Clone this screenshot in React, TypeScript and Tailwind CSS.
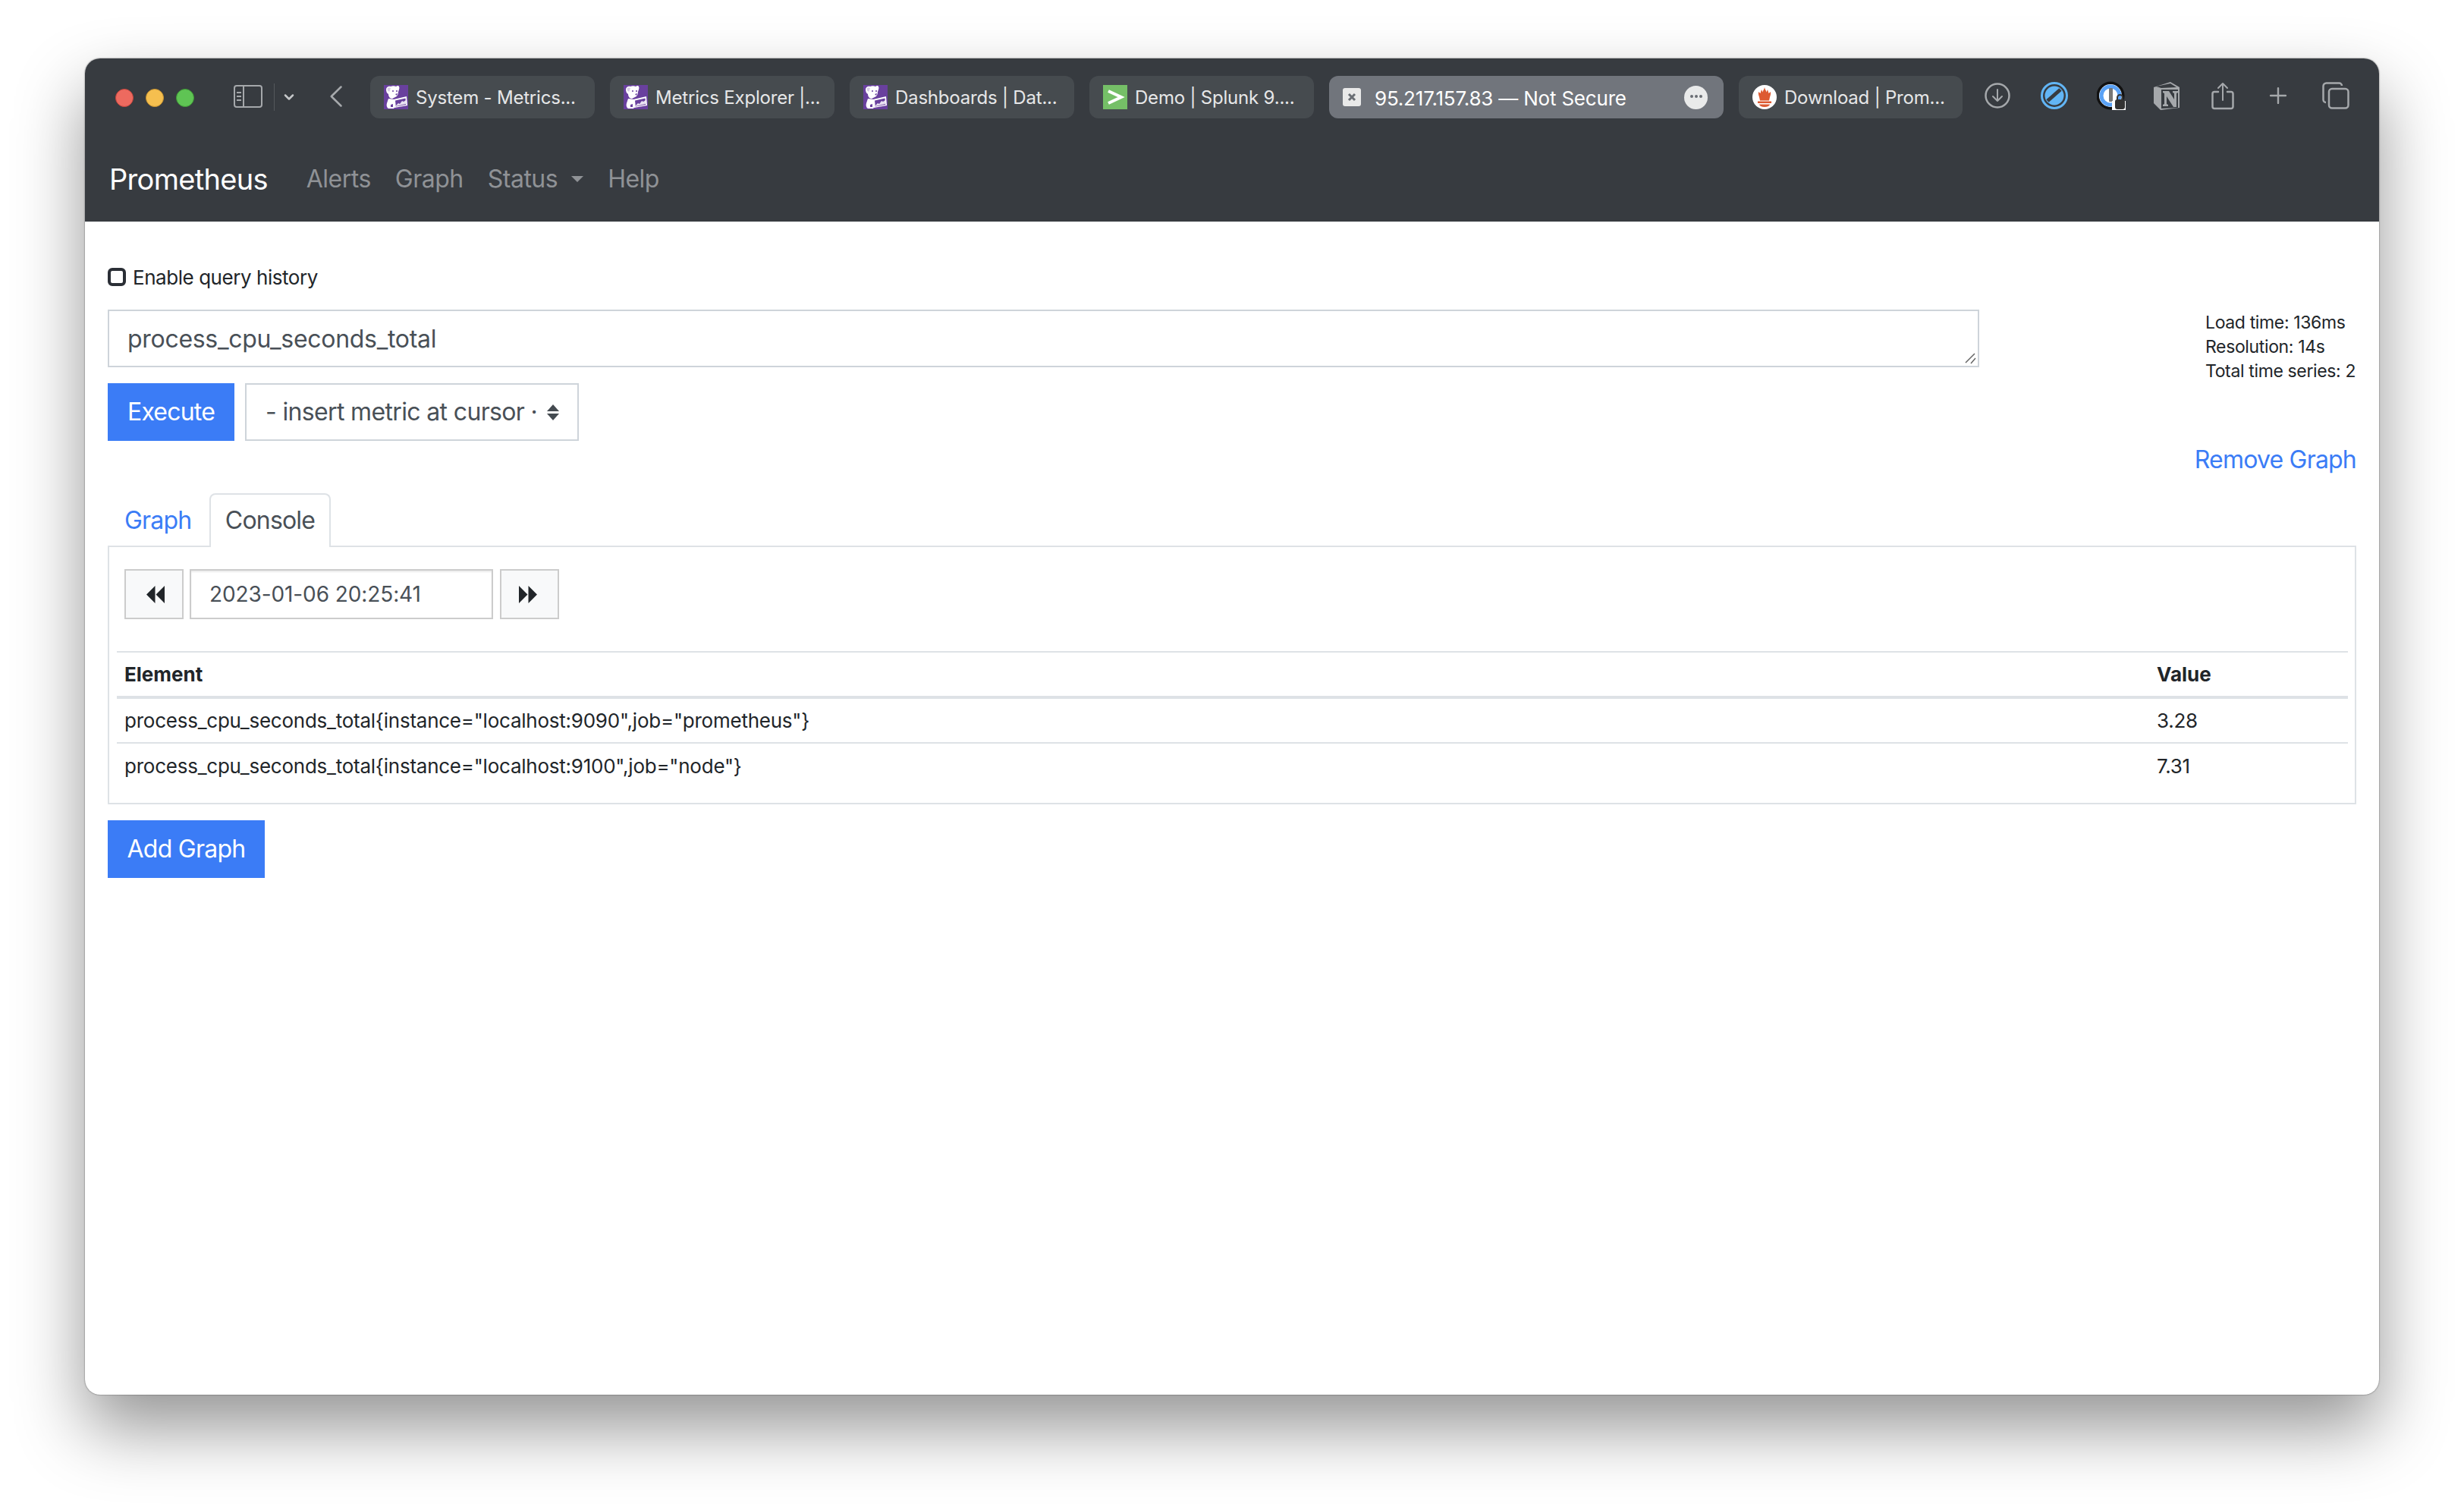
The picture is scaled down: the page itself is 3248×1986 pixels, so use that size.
import React from 'react';
import { ChevronDown, Plus } from 'lucide-react';

const sans = "font-['Inter','Liberation_Sans',sans-serif]";

const DogIcon: React.FC = () => (
  <svg width="32" height="32" viewBox="0 0 32 32" className="shrink-0">
    <rect width="32" height="32" fill="#69409e" />
    {/* head and ears */}
    <path d="M3 6c0-3 3-5 6-4 2-1 5-1 7 0l2-1c2 0 3 2 2 5l-1 3c0 3-1 6-4 7l-4 2c-3 0-5-3-5-6C4 11 3 9 3 6z" fill="#fff" />
    <path d="M5 4c1-1 3-1 4 0-1 2-1 4-2 5-2-1-3-3-2-5z" fill="#d9cfe6" />
    <circle cx="12" cy="8" r="1" fill="#69409e" />
    <circle cx="17" cy="8" r="1" fill="#69409e" />
    <path d="M15 12l3-1-1 3z" fill="#69409e" />
    {/* body */}
    <path d="M6 18l8 1 1 9-2 3H6c-2-1-3-4-2-7z" fill="#fff" />
    <path d="M9 26l3-1v4H9z" fill="#69409e" />
    {/* paper */}
    <path d="M13 19l17-4 1 12-17 3z" fill="#fff" />
    <path d="M15 20.500l13.500-3 .8 8.500-13.500 2.500z" fill="#69409e" />
    <path d="M16 27l3-3 2 1 3-4 2 1 3-2v5l-13 3z" fill="#e7e0f0" />
  </svg>
);

const SplunkIcon: React.FC = () => (
  <svg width="32" height="32" viewBox="0 0 32 32" className="shrink-0">
    <rect width="32" height="32" fill="#75bf67" />
    <path d="M7 8l17 8-17 8" fill="none" stroke="#fff" strokeWidth="4" />
  </svg>
);

const PromIcon: React.FC = () => (
  <svg width="32" height="32" viewBox="0 0 32 32" className="shrink-0">
    <circle cx="16" cy="16" r="16" fill="#fff" />
    <path
      d="M16 3c.5 3 2 4 2.500 6.500L20 6c.5 2 1 3 1.500 5L24 9c.5 3-.5 5-1 7-.5 1.500-.5 3-1 4.500H10c-.5-1.500-.5-3-1-4.500-.5-2-1.500-4-1-7l2.500 2C11 9 11.500 8 12 6l1.500 3.500C14 7 15.500 6 16 3z"
      fill="#dd5a31"
    />
    <rect x="7" y="21.500" width="18" height="2.500" fill="#dd5a31" />
    <path d="M9 25.500h14c-.5 2-3 3.500-7 3.500s-6.500-1.500-7-3.500z" fill="#dd5a31" />
  </svg>
);

const tabs = [
  { title: 'System - Metrics...', icon: <DogIcon /> },
  { title: 'Metrics Explorer |...', icon: <DogIcon /> },
  { title: 'Dashboards | Dat...', icon: <DogIcon /> },
  { title: 'Demo | Splunk 9....', icon: <SplunkIcon /> },
];

const BrowserTab: React.FC<{ title: string; icon: React.ReactNode; width?: string }> = ({ title, icon, width = 'w-[296px]' }) => (
  <div className={`flex h-[56px] ${width} shrink-0 items-center gap-[10px] rounded-[12px] bg-[#464b4f] pl-[18px]`}>
    {icon}
    <span className="whitespace-nowrap pt-[2px] text-[24px] tracking-[-0.2px] text-[#e6e7e8]">{title}</span>
  </div>
);

const ActiveTab: React.FC = () => (
  <div className="flex h-[56px] w-[520px] shrink-0 items-center rounded-[12px] bg-[#71757c] pl-[18px] pr-[21px]">
    <div className="flex h-[24px] w-[24px] items-center justify-center rounded-[3px] bg-[#e9e9e9]">
      <svg width="12" height="12" viewBox="0 0 12 12">
        <path d="M2 2l8 8M10 2l-8 8" stroke="#6a6e74" strokeWidth="3" />
      </svg>
    </div>
    <span className="ml-[18px] flex-1 whitespace-nowrap pt-[2px] text-[26px] tracking-[-0.2px] text-white">95.217.157.83 — Not Secure</span>
    <div className="flex h-[31px] w-[31px] items-center justify-center gap-[2px] rounded-full bg-[#e9eaea] pb-[2px]">
      <span className="h-[4px] w-[4px] rounded-full bg-[#6a6e74]" />
      <span className="h-[4px] w-[4px] rounded-full bg-[#6a6e74]" />
      <span className="h-[4px] w-[4px] rounded-full bg-[#6a6e74]" />
    </div>
  </div>
);

const ToolbarIcons: React.FC = () => (
  <div className="ml-[29px] mt-[7px] flex items-center">
    <svg width="34" height="34" viewBox="0 0 34 34" fill="none" stroke="#a5a8ab" strokeWidth="2.500" strokeLinecap="round" strokeLinejoin="round">
      <circle cx="17" cy="17" r="15.500" />
      <path d="M17 9v15M11 18l6 6 6-6" strokeWidth="2" />
    </svg>
    <svg width="36" height="36" viewBox="0 0 36 36" className="ml-[40px]">
      <circle cx="18" cy="18" r="16.500" fill="none" stroke="#62b5f5" strokeWidth="3" />
      <circle cx="18" cy="18" r="12.500" fill="#62b5f5" />
      <path d="M9 25L26 10" stroke="#373b40" strokeWidth="5" />
    </svg>
    <svg width="38" height="38" viewBox="0 0 38 38" className="ml-[38px]">
      <circle cx="18" cy="19" r="18.500" fill="#111" />
      <circle cx="18" cy="19" r="15" fill="#fff" />
      <circle cx="18" cy="19" r="12" fill="none" stroke="#5aa2f6" strokeWidth="5" />
      <rect x="16" y="9" width="5" height="18" rx="1" fill="#777" />
      <rect x="20" y="26" width="18" height="12" fill="#fff" />
      <path d="M27 24v-2.500a3.500 3.500 0 017 0V24" fill="none" stroke="#333" strokeWidth="2" />
      <rect x="24" y="24" width="13" height="13" rx="3" fill="#333" />
    </svg>
    <svg width="36" height="38" viewBox="0 0 36 38" className="ml-[36px]">
      <path d="M1 8l22-7 12 7v27l-25 3-9-9z" fill="#a5a8ab" />
      <path d="M11 11h22v24l-22 1z" fill="#373b40" />
      <path d="M4 7l19-4 8 5-20 1z" fill="#373b40" />
      <path d="M13 13h8l7 11V16l-2-1v-2h7v2l-2 1v18h-4l-9-14v10l2 1v2h-7v-2l2-1V16l-2-1z" fill="#a5a8ab" />
    </svg>
    <svg width="30" height="37" viewBox="0 0 30 37" fill="none" stroke="#a5a8ab" strokeWidth="2.500" strokeLinecap="round" strokeLinejoin="round" className="ml-[41px]">
      <path d="M9 13H4a2.500 2.500 0 00-2.500 2.500v17A2.500 2.500 0 004 35h22a2.500 2.500 0 002.500-2.500v-17A2.500 2.500 0 0026 13h-5" />
      <path d="M15 24V2M9 8l6-6 6 6" strokeWidth="2" />
    </svg>
    <Plus size={34} color="#a5a8ab" strokeWidth={1.7} className="ml-[41px]" />
    <svg width="36" height="36" viewBox="0 0 36 36" fill="none" stroke="#a5a8ab" strokeWidth="2.500" className="ml-[41px]">
      <path d="M5 27a3.500 3.500 0 01-3.500-3.500v-18A4 4 0 015.500 1.500h17A3.500 3.500 0 0126 5" />
      <rect x="9" y="9" width="25.500" height="25.500" rx="4" />
    </svg>
  </div>
);

const App: React.FC = () => {
  return (
    <div className={`h-[1986px] w-[3248px] overflow-hidden bg-white pl-[112px] pt-[77px] ${sans}`}>
      <div className="flex h-[1761px] w-[3024px] flex-col overflow-hidden rounded-[20px] bg-white shadow-[0_44px_90px_rgba(0,0,0,0.42),0_0_2px_rgba(0,0,0,0.6)]">
        {/* safari toolbar */}
        <div className="flex h-[102px] shrink-0 items-start bg-[#373b40] pt-[23px]">
          <div className="ml-[40px] mt-[17px] flex gap-[16px]">
            <span className="h-[24px] w-[24px] rounded-full border border-[#c9463e] bg-[#ed6a5f]" />
            <span className="h-[24px] w-[24px] rounded-full border border-[#c8932f] bg-[#f5bf4f]" />
            <span className="h-[24px] w-[24px] rounded-full border border-[#3f9a36] bg-[#5fc454]" />
          </div>
          <div className="ml-[52px] mt-[12px] flex h-[30px] w-[38px] overflow-hidden rounded-[4px] border-2 border-[#a5a8ab]">
            <div className="flex w-[12px] flex-col items-center justify-center gap-[3px] border-r-2 border-[#a5a8ab]">
              <span className="h-[2px] w-[6px] bg-[#a5a8ab]" />
              <span className="h-[2px] w-[6px] bg-[#a5a8ab]" />
              <span className="h-[2px] w-[6px] bg-[#a5a8ab]" />
            </div>
          </div>
          <div className="ml-[15px] mt-[10px] h-[36px] w-[1px] bg-[#54585c]" />
          <ChevronDown size={20} color="#c5c7c9" strokeWidth={3} className="ml-[9px] mt-[18px]" />
          <svg width="16" height="28" viewBox="0 0 16 28" fill="none" stroke="#a5a8ab" strokeWidth="2.500" strokeLinecap="round" strokeLinejoin="round" className="ml-[44px] mt-[13px]">
            <path d="M14.500 1.500L1.800 14l12.700 12.500" />
          </svg>
          <div className="ml-[37px] flex gap-[20px]">
            {tabs.map((t) => (
              <BrowserTab key={t.title} title={t.title} icon={t.icon} />
            ))}
            <ActiveTab />
            <BrowserTab title="Download | Prom..." icon={<PromIcon />} width="w-[295px]" />
          </div>
          <ToolbarIcons />
        </div>

        {/* navbar */}
        <div className="flex h-[113px] shrink-0 items-center bg-[#373b40] pl-[32px] pt-[1px]">
          <span className="text-[38px] tracking-[-0.7px] text-white">Prometheus</span>
          <nav className="ml-[51px] flex items-center text-[32px] tracking-[-0.5px] text-[#8f9296]">
            <span>Alerts</span>
            <span className="ml-[32px]">Graph</span>
            <span className="ml-[32px]">Status</span>
            <span className="ml-[18px] h-0 w-0 border-x-[8px] border-t-[8px] border-x-transparent border-t-[#8f9296]" />
            <span className="ml-[32px]">Help</span>
          </nav>
        </div>

        {/* page */}
        <div className="relative flex-1 px-[30px] pt-[61px] text-[#212529]">
          <div className="flex h-[24px] items-center">
            <span className="h-[24px] w-[24px] rounded-[6px] border-[4px] border-[#2b2f36] bg-white" />
            <span className="ml-[9px] whitespace-nowrap text-[26px] tracking-[-0.45px]">Enable query history</span>
          </div>

          <div className="mt-[31px] flex h-[76px] items-start">
            <div className="relative flex h-[76px] w-[2467px] shrink-0 items-center border-2 border-[#ced4da] pl-[24px] pt-[2px] text-[32px] tracking-[-0.3px] text-[#495057]">
              process_cpu_seconds_total
              <svg width="16" height="16" viewBox="0 0 16 16" className="absolute bottom-[2px] right-[2px]">
                <path d="M2 14L14 2M9 15l6-7" stroke="#666" strokeWidth="1.500" />
              </svg>
            </div>
            <div className="ml-[298px] whitespace-nowrap pt-[1px] text-[23px] leading-[32px] tracking-[-0.36px]">
              <div>Load time: 136ms</div>
              <div>Resolution: 14s</div>
              <div>Total time series: 2</div>
            </div>
          </div>

          <div className="mt-[21px] flex">
            <button className="h-[76px] w-[167px] bg-[#3b7cf6] text-[32px] tracking-[-0.8px] text-white">Execute</button>
            <div className="ml-[14px] flex h-[76px] w-[440px] items-center border-2 border-[#ced4da] pl-[25px] text-[32px] tracking-[-0.65px] text-[#495057]">
              <span className="w-[371px] whitespace-nowrap">- insert metric at cursor ·</span>
              <div className="flex flex-col gap-[3px]">
                <span className="h-0 w-0 border-x-[8px] border-b-[9px] border-x-transparent border-b-[#444a50]" />
                <span className="h-0 w-0 border-x-[8px] border-t-[9px] border-x-transparent border-t-[#444a50]" />
              </div>
            </div>
          </div>

          <div className="mt-[1px] text-right text-[32px] leading-[48px] tracking-[-0.8px] text-[#3b7cf6]">Remove Graph</div>

          <div className="mt-[20px] flex h-[71px] items-stretch text-[32px] tracking-[-0.8px]">
            <div className="flex w-[134px] items-center pl-[22px] text-[#3b7cf6]">Graph</div>
            <div className="relative z-10 flex w-[160px] items-center justify-center rounded-t-[8px] border-2 border-b-0 border-[#dee2e6] bg-white pb-[1px] text-[#495057]">Console</div>
          </div>

          <div className="mt-[-2px] flex h-[341px] flex-col border-2 border-[#dee2e6] px-[10px] pt-[29px]">
            <div className="flex h-[66px] pl-[10px]">
              <div className="flex w-[78px] items-center justify-center border-2 border-[#cccccc] bg-[#f8f9fa] pl-[3px]">
                <svg width="25" height="25" viewBox="0 0 24 24" fill="#212529">
                  <path d="M12 1v22L1 12zM24 1v22L13 12z" />
                </svg>
              </div>
              <div className="ml-[8px] flex w-[400px] items-center border-2 border-[#cccccc] pl-[24px] text-[28px] tracking-[-0.1px] text-[#495057] shadow-[inset_0_2px_2px_rgba(0,0,0,0.08)]">2023-01-06 20:25:41</div>
              <div className="ml-[9px] flex w-[78px] items-center justify-center border-2 border-[#cccccc] bg-[#f8f9fa] pr-[4px]">
                <svg width="25" height="25" viewBox="0 0 24 24" fill="#212529">
                  <path d="M0 1v22l11-11zM12 1v22l11-11z" />
                </svg>
              </div>
            </div>

            <table className="mt-[42px] w-[2941px] table-fixed border-collapse text-left text-[26px] tracking-[-0.24px]">
              <thead>
                <tr className="h-[60px] border-t-2 border-b-4 border-[#dee2e6]">
                  <th className="pl-[10px] font-bold tracking-[0px]">Element</th>
                  <th className="w-[262px] pl-[10px] font-bold tracking-[0px]">Value</th>
                </tr>
              </thead>
              <tbody>
                <tr className="h-[60px] border-b-2 border-[#dee2e6]">
                  <td className="pl-[10px]">{'process_cpu_seconds_total{instance="localhost:9090",job="prometheus"}'}</td>
                  <td className="pl-[10px]">3.28</td>
                </tr>
                <tr className="h-[60px]">
                  <td className="pl-[10px]">{'process_cpu_seconds_total{instance="localhost:9100",job="node"}'}</td>
                  <td className="pl-[10px]">7.31</td>
                </tr>
              </tbody>
            </table>
          </div>

          <button className="mt-[21px] h-[76px] w-[207px] bg-[#3b7cf6] text-[32px] tracking-[-0.75px] text-white">Add Graph</button>
        </div>
      </div>
    </div>
  );
};

export default App;
